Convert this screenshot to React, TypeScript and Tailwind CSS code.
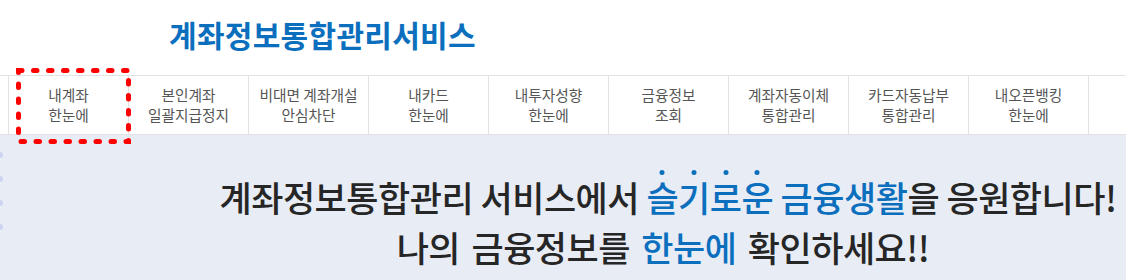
import React from "react";

const navItems: [string, string][] = [
  ["내계좌", "한눈에"],
  ["본인계좌", "일괄지급정지"],
  ["비대면 계좌개설", "안심차단"],
  ["내카드", "한눈에"],
  ["내투자성향", "한눈에"],
  ["금융정보", "조회"],
  ["계좌자동이체", "통합관리"],
  ["카드자동납부", "통합관리"],
  ["내오픈뱅킹", "한눈에"],
];

function Dotted({ ch }: { ch: string }) {
  return (
    <span className="relative inline-block">
      {ch}
      <span className="absolute left-1/2 top-[-2px] h-[5px] w-[5px] -translate-x-1/2 rounded-full bg-[#0b6fbe]" />
    </span>
  );
}

export default function App() {
  return (
    <div
      className="relative h-[280px] w-[1126px] overflow-hidden bg-white"
      style={{ fontFamily: '"Noto Sans CJK KR", "Noto Sans", sans-serif' }}
    >
      <header className="h-[75px] pl-[169px] pt-[12px]">
        <h1 className="text-[30px] font-bold leading-[44px] tracking-[0.3px] text-[#0b6fbe]">
          계좌정보통합관리서비스
        </h1>
      </header>

      <nav className="relative z-10 h-[60px] border-y border-[#e2e2e2] bg-white">
        <ul className="ml-[8px] flex h-full border-l border-[#e2e2e2]">
          {navItems.map(([a, b]) => (
            <li
              key={a}
              className="flex w-[120px] flex-col items-center justify-center border-r border-[#e2e2e2] text-[14.7px] leading-[20px] text-[#555555]"
            >
              <span>{a}</span>
              <span>{b}</span>
            </li>
          ))}
        </ul>
        <svg
          className="absolute left-[16px] top-[-8px] z-20"
          width="115"
          height="76"
          viewBox="0 0 115 76"
        >
          <rect
            x="2.5"
            y="2.5"
            width="110"
            height="71"
            fill="none"
            stroke="#ff0000"
            strokeWidth="5"
            strokeDasharray="3.5 11.5"
            strokeLinecap="round"
          />
        </svg>
      </nav>

      <main className="relative h-[145px] bg-[#e8ecf5] pl-[210px] pt-[37px]">
        <div className="absolute left-[-3px] top-[17px] flex flex-col gap-[18px]">
          <span className="h-[6px] w-[6px] rounded-full bg-[#cdd4f0]" />
          <span className="h-[6px] w-[6px] rounded-full bg-[#cdd4f0]" />
          <span className="h-[6px] w-[6px] rounded-full bg-[#cdd4f0]" />
          <span className="h-[6px] w-[6px] rounded-full bg-[#cdd4f0]" />
        </div>
        <div className="text-center text-[35px] font-medium leading-[50px] tracking-[-0.5px] text-[#262626]">
          <p>
            계좌정보통합관리 서비스에서{" "}
            <span className="text-[#0b6fbe]">
              <Dotted ch="슬" />
              <Dotted ch="기" />
              <Dotted ch="로" />
              <Dotted ch="운" /> 금융생활
            </span>
            을 응원합니다!
          </p>
          <p className="pr-[10px] [word-spacing:4px]">
            나의 금융정보를 <span className="text-[#0b6fbe]">한눈에</span> 확인하세요!!
          </p>
        </div>
      </main>
    </div>
  );
}
